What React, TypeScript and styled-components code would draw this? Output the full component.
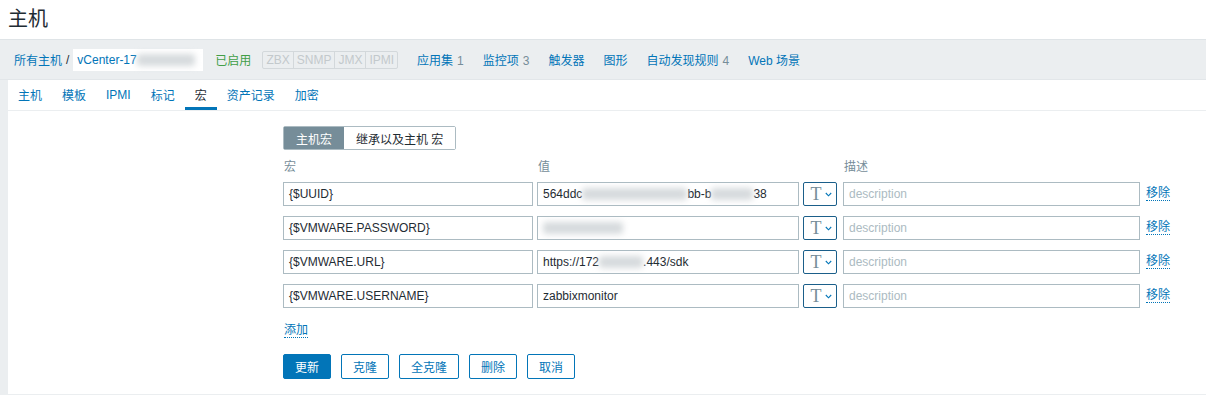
import React from 'react'
import styled, { createGlobalStyle } from 'styled-components'

const GlobalStyle = createGlobalStyle`
  html, body {
    margin: 0;
    padding: 0;
  }
  body {
    background: #ebeef0;
    font-family: "Liberation Sans", "Noto Sans CJK SC", sans-serif;
    font-size: 12px;
    color: #1f2c33;
  }
`

const PageHeader = styled.header`
  height: 39px;
  background: #fff;
  display: flex;
  align-items: center;
  padding-left: 8px;
  border-bottom: 1px solid #dfe4e7;
`

const Title = styled.h1`
  margin: 0 0 4px;
  font-size: 20px;
  font-weight: normal;
  color: #1f2c33;
`

const Breadcrumbs = styled.nav`
  height: 39px;
  display: flex;
  align-items: center;
  padding-left: 14px;
  border-bottom: 1px solid #e2e6e9;
`

const Link = styled.a`
  color: #0275b8;
  text-decoration: none;
  white-space: nowrap;
`

const HeadLink = styled(Link)`
  margin-left: 19px;
`

const Count = styled.span`
  color: #768d99;
  margin-left: 4px;
`

const Slash = styled.span`
  margin: 0 4px;
  color: #1f2c33;
`

const CurrentHost = styled.span`
  display: inline-flex;
  align-items: center;
  background: #fff;
  height: 22px;
  width: 122px;
  padding: 0 4px;
  color: #0275b8;
`

const Blur = styled.span<{ $w: number }>`
  display: inline-block;
  width: ${p => p.$w}px;
  height: 12px;
  background: #d6dadd;
  filter: blur(3px);
  border-radius: 3px;
`

const Enabled = styled.span`
  color: #429e47;
  margin-left: 12px;
`

const Tags = styled.span`
  display: inline-flex;
  margin-left: 11px;
  border: 1px solid #d3d8db;
  border-radius: 2px;
  height: 16px;
`

const Tag = styled.span`
  color: #c3c9cc;
  font-size: 12px;
  line-height: 16px;
  padding: 0 3px;
  & + & {
    border-left: 1px solid #d3d8db;
  }
`

const Panel = styled.main`
  background: #fff;
  margin-left: 8px;
  padding-bottom: 15px;
  margin-bottom: 3px;
`

const TabList = styled.ul`
  list-style: none;
  margin: 0;
  padding: 0;
  display: flex;
  height: 30px;
  border-bottom: 1px solid #ebeef0;
`

const Tab = styled.li<{ $active?: boolean }>`
  padding: 0 10px;
  display: flex;
  align-items: center;
  color: ${p => (p.$active ? '#1f2c33' : '#0275b8')};
  border-bottom: 3px solid ${p => (p.$active ? '#0275b8' : 'transparent')};
  padding-top: 2px;
`

const Form = styled.form`
  padding: 15px 0 0 275px;
`

const Toggle = styled.div`
  display: inline-flex;
  border: 1px solid #acbbc2;
  border-radius: 2px;
  height: 22px;
`

const ToggleItem = styled.span<{ $on?: boolean }>`
  display: flex;
  align-items: center;
  padding: 0 12px;
  background: ${p => (p.$on ? '#768d99' : '#fff')};
  color: ${p => (p.$on ? '#fff' : '#1f2c33')};
`

const MacroGrid = styled.div`
  display: grid;
  grid-template-columns: 250px 262px 34px 299px auto;
  column-gap: 4px;
  row-gap: 10px;
  margin-top: 11px;
`

const ColLabel = styled.div`
  color: #768d99;
  height: 12px;
  line-height: 12px;
  margin-bottom: -1px;
  padding-left: 1px;
`

const Field = styled.div<{ $placeholder?: boolean; $shift?: number }>`
  box-sizing: border-box;
  height: 24px;
  border: 1px solid #acbbc2;
  display: flex;
  align-items: center;
  padding: 0 5px;
  white-space: nowrap;
  overflow: hidden;
  color: ${p => (p.$placeholder ? '#acbbc2' : '#1f2c33')};
  margin-left: ${p => p.$shift ?? 0}px;
`

const TypeButton = styled.button`
  box-sizing: border-box;
  height: 24px;
  border: 1px solid #1b5f8a;
  border-radius: 2px;
  background: #fff;
  display: flex;
  align-items: center;
  justify-content: center;
  padding: 0 0 0 2px;
  font-family: "Liberation Serif", serif;
  font-size: 18px;
  color: #768d99;
  gap: 3px;
`

const RemoveLink = styled(Link)`
  margin-left: 2px;
  align-self: center;
  justify-self: start;
  border-bottom: 1px dotted #0275b8;
  line-height: 13px;
`

const AddLink = styled(Link)`
  display: inline-block;
  margin: 15px 0 0 1px;
  border-bottom: 1px dotted #0275b8;
  line-height: 14px;
`

const Buttons = styled.div`
  display: flex;
  gap: 10px;
  margin-top: 16px;
`

const Button = styled.button<{ $primary?: boolean }>`
  height: 25px;
  padding: 0 11px;
  border-radius: 2px;
  font-family: inherit;
  font-size: 12px;
  border: 1px solid #0275b8;
  background: ${p => (p.$primary ? '#0275b8' : '#fff')};
  color: ${p => (p.$primary ? '#fff' : '#0275b8')};
`

const Chevron = () => (
  <svg width="7" height="5" viewBox="0 0 7 5">
    <path d="M0.8 1 L3.5 3.8 L6.2 1" fill="none" stroke="#0275b8" strokeWidth="1.1" />
  </svg>
)

type Macro = { name: string; value: React.ReactNode }

const macros: Macro[] = [
  {
    name: '{$UUID}',
    value: (
      <>
        564ddc<Blur $w={105} />bb-b<Blur $w={42} />38
      </>
    ),
  },
  {
    name: '{$VMWARE.PASSWORD}',
    value: (
      <>
        <Blur $w={80} />
      </>
    ),
  },
  {
    name: '{$VMWARE.URL}',
    value: (
      <>
        https://172<Blur $w={44} />.443/sdk
      </>
    ),
  },
  { name: '{$VMWARE.USERNAME}', value: 'zabbixmonitor' },
]

const tabs = ['主机', '模板', 'IPMI', '标记', '宏', '资产记录', '加密']

export default function App() {
  return (
    <>
      <GlobalStyle />
      <PageHeader>
        <Title>主机</Title>
      </PageHeader>
      <Breadcrumbs>
        <Link>所有主机</Link>
        <Slash>/</Slash>
        <CurrentHost>
          vCenter-17<Blur $w={58} />
        </CurrentHost>
        <Enabled>已启用</Enabled>
        <Tags>
          <Tag>ZBX</Tag>
          <Tag>SNMP</Tag>
          <Tag>JMX</Tag>
          <Tag>IPMI</Tag>
        </Tags>
        <HeadLink>
          应用集<Count>1</Count>
        </HeadLink>
        <HeadLink>
          监控项<Count>3</Count>
        </HeadLink>
        <HeadLink>触发器</HeadLink>
        <HeadLink>图形</HeadLink>
        <HeadLink>
          自动发现规则<Count>4</Count>
        </HeadLink>
        <HeadLink>Web 场景</HeadLink>
      </Breadcrumbs>
      <Panel>
        <TabList>
          {tabs.map(t => (
            <Tab key={t} $active={t === '宏'}>
              {t}
            </Tab>
          ))}
        </TabList>
        <Form>
          <Toggle>
            <ToggleItem $on>主机宏</ToggleItem>
            <ToggleItem>继承以及主机 宏</ToggleItem>
          </Toggle>
          <MacroGrid>
            <ColLabel>宏</ColLabel>
            <ColLabel>值</ColLabel>
            <div />
            <ColLabel style={{ marginLeft: 2 }}>描述</ColLabel>
            <div />
            {macros.map(m => (
              <React.Fragment key={m.name}>
                <Field>{m.name}</Field>
                <Field>{m.value}</Field>
                <TypeButton type="button">
                  T<Chevron />
                </TypeButton>
                <Field $placeholder $shift={2}>
                  description
                </Field>
                <RemoveLink>移除</RemoveLink>
              </React.Fragment>
            ))}
          </MacroGrid>
          <AddLink>添加</AddLink>
          <Buttons>
            <Button type="button" $primary>
              更新
            </Button>
            <Button type="button">克隆</Button>
            <Button type="button">全克隆</Button>
            <Button type="button">删除</Button>
            <Button type="button">取消</Button>
          </Buttons>
        </Form>
      </Panel>
    </>
  )
}
